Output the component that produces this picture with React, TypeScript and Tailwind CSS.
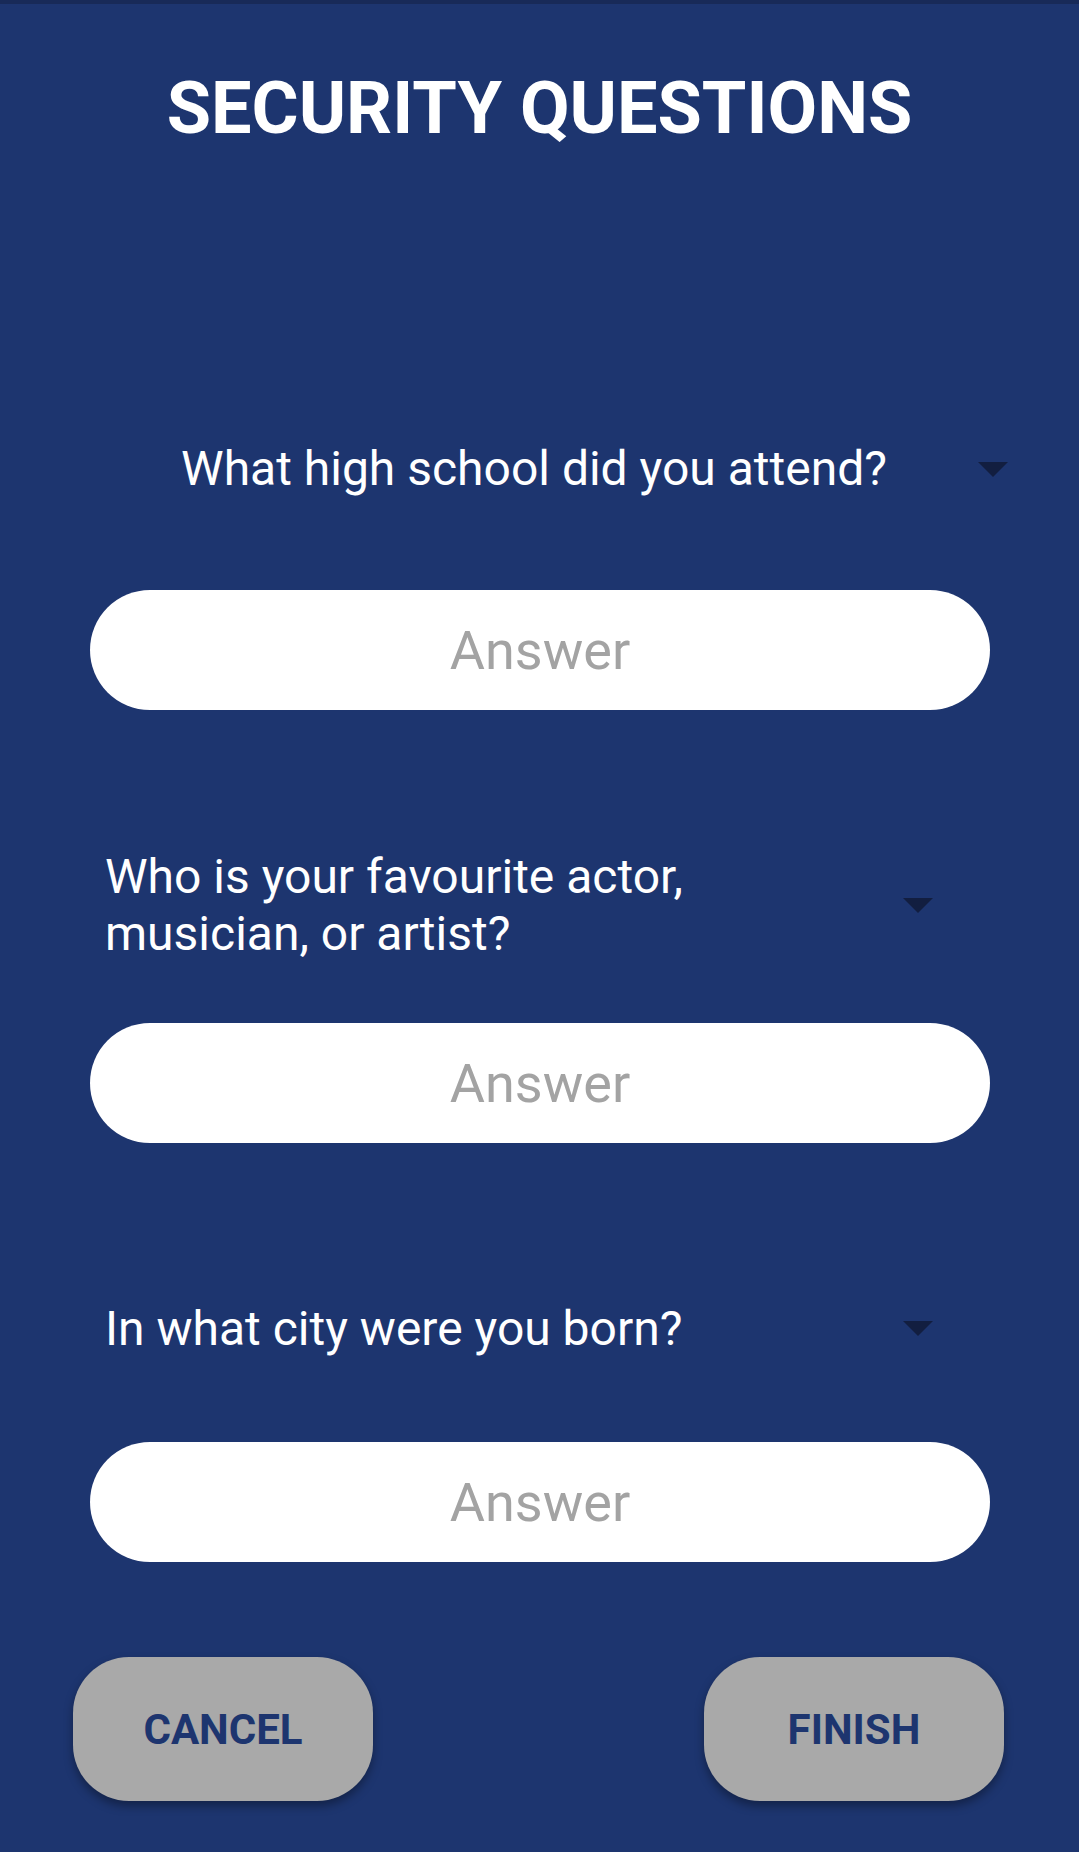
const questions = [
  { text: "Who is your favourite actor, musician, or artist?", gapTop: "mt-[138px]", gapInput: "mt-[61px]" },
  { text: "In what city were you born?", gapTop: "mt-[157px]", gapInput: "mt-[85px]" },
];

function Caret() {
  return (
    <svg width="30" height="15" viewBox="0 0 30 15" className="shrink-0">
      <polygon points="0,0 30,0 15,15" fill="#121e40" />
    </svg>
  );
}

function AnswerInput({ className }: { className: string }) {
  return (
    <input
      placeholder="Answer"
      className={`${className} ml-[90px] block h-[120px] w-[900px] rounded-full bg-white text-center text-[54px] text-[#a3a3a3] placeholder:text-[#a3a3a3] outline-none`}
    />
  );
}

export default function App() {
  return (
    <div className="min-h-[1852px] w-[1079px] bg-[#1d356f] font-['Roboto',sans-serif] text-white">
      <div className="h-[4px] bg-[#182a58]" />
      <h1 className="mt-[69px] text-center text-[72px] font-bold leading-none">SECURITY QUESTIONS</h1>

      {/* first spinner is wider, text centred */}
      <div className="mt-[300px] flex items-center pl-[90px] pr-[71px]">
        <span className="flex-1 text-center text-[48px] leading-none">What high school did you attend?</span>
        <Caret />
      </div>
      <AnswerInput className="mt-[97px]" />

      {questions.map((q) => (
        <div key={q.text}>
          <div className={`${q.gapTop} flex items-center justify-between pl-[105px] pr-[146px]`}>
            <span className="max-w-[700px] text-[48px] leading-[57px]">{q.text}</span>
            <Caret />
          </div>
          <AnswerInput className={q.gapInput} />
        </div>
      ))}

      <div className="mt-[95px] flex justify-between pl-[73px] pr-[75px]">
        <button className="h-[144px] w-[300px] rounded-[56px] bg-[#a9a9a9] text-[42px] font-bold text-[#1d356f] shadow-[0_5px_10px_rgba(0,0,0,0.35)]">
          CANCEL
        </button>
        <button className="h-[144px] w-[300px] rounded-[56px] bg-[#a9a9a9] text-[42px] font-bold text-[#1d356f] shadow-[0_5px_10px_rgba(0,0,0,0.35)]">
          FINISH
        </button>
      </div>
    </div>
  );
}
